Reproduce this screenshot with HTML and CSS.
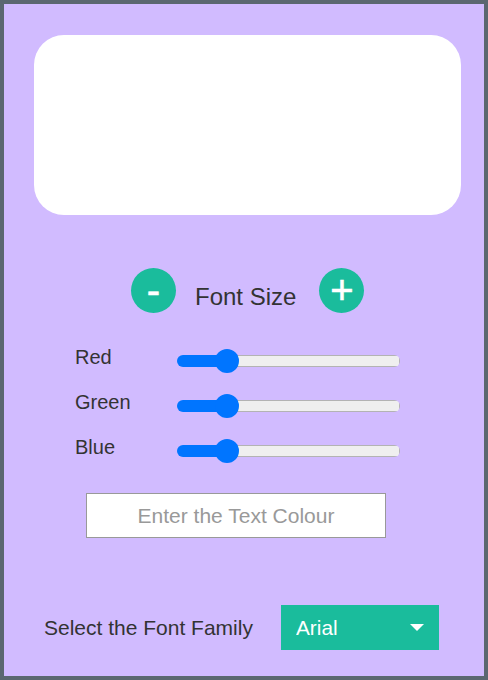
FILE: index.html
```html
<!DOCTYPE html>
<html lang="en">
<head>
<meta charset="utf-8">
<title>Text Styler</title>
<link rel="stylesheet" href="styles.css">
</head>
<body>
<div class="app">
  <div class="preview"></div>

  <div class="size-row">
    <button class="round-btn minus" type="button">-</button>
    <span class="size-label">Font Size</span>
    <button class="round-btn plus" type="button">+</button>
  </div>

  <div class="sliders">
    <div class="slider-row">
      <label class="slider-label" for="r">Red</label>
      <input class="range" id="r" type="range" min="0" max="255" value="49">
    </div>
    <div class="slider-row">
      <label class="slider-label" for="g">Green</label>
      <input class="range" id="g" type="range" min="0" max="255" value="49">
    </div>
    <div class="slider-row">
      <label class="slider-label" for="b">Blue</label>
      <input class="range" id="b" type="range" min="0" max="255" value="49">
    </div>
  </div>

  <input class="colour-input" type="text" placeholder="Enter the Text Colour">

  <div class="family-row">
    <span class="family-label">Select the Font Family</span>
    <div class="select-wrap">
      <select class="family-select">
        <option>Arial</option>
        <option>Roboto</option>
        <option>Lato</option>
      </select>
    </div>
  </div>
</div>
</body>
</html>
```

FILE: styles.css
```css
* { box-sizing: border-box; }

body {
  margin: 0;
  font-family: "Liberation Sans", Arial, sans-serif;
  color: #333;
}

.app {
  width: 488px;
  height: 680px;
  border: 4px solid #5b6770;
  background: #d1bbff;
  padding: 31px 23px 0 30px;
}

.preview {
  height: 180px;
  background: #fff;
  border-radius: 30px;
}

.size-row {
  margin-top: 53px;
  margin-left: 97px;
  display: flex;
  align-items: flex-start;
}

.round-btn {
  width: 45px;
  height: 45px;
  border-radius: 50%;
  border: none;
  padding: 0;
  background: #1abc9c;
  color: #fff;
  font-family: "Liberation Sans", Arial, sans-serif;
  font-size: 40px;
  line-height: 45px;
  text-align: center;
  -webkit-text-stroke: 0.6px #fff;
}

.size-label {
  font-size: 24px;
  line-height: 28px;
  margin: 15px 23px 0 19px;
}

.sliders {
  margin-top: 33px;
  padding-left: 41px;
}

.slider-row {
  display: flex;
  align-items: flex-start;
  height: 45px;
}

.slider-label {
  width: 102px;
  font-size: 20px;
  line-height: 23px;
}

.range {
  -webkit-appearance: none;
  appearance: none;
  width: 223px;
  height: 24px;
  margin: 3px 0 0;
  padding: 0;
  background: transparent;
}

.range::-webkit-slider-runnable-track {
  height: 12px;
  border-radius: 6px;
  background:
    linear-gradient(#0075ff, #0075ff) left center / 50px 100% no-repeat,
    linear-gradient(#efefef, #efefef) center / calc(100% - 2px) calc(100% - 2px) no-repeat,
    #b3b3b3;
}

.range::-webkit-slider-thumb {
  -webkit-appearance: none;
  appearance: none;
  width: 24px;
  height: 24px;
  margin-top: -6px;
  border: none;
  border-radius: 50%;
  background: #0075ff;
}

.colour-input {
  display: block;
  margin: 12px 0 0 52px;
  width: 300px;
  height: 45px;
  border: 1px solid #999;
  background: #fff;
  font-family: "Liberation Sans", Arial, sans-serif;
  font-size: 21px;
  text-align: center;
  outline: none;
}

.colour-input::placeholder {
  color: #999;
}

.family-row {
  margin: 67px 0 0 10px;
  display: flex;
  align-items: center;
}

.family-label {
  font-size: 21px;
  width: 237px;
}

.select-wrap {
  position: relative;
  width: 158px;
  height: 45px;
}

.select-wrap::after {
  content: "";
  position: absolute;
  right: 15px;
  top: 19px;
  border-left: 7px solid transparent;
  border-right: 7px solid transparent;
  border-top: 7px solid #fff;
  pointer-events: none;
}

.family-select {
  -webkit-appearance: none;
  appearance: none;
  width: 100%;
  height: 100%;
  border: none;
  border-radius: 0;
  background: #1abc9c;
  color: #fff;
  font-family: "Liberation Sans", Arial, sans-serif;
  font-size: 20.8px;
  padding: 0 0 0 15px;
  outline: none;
}
```
